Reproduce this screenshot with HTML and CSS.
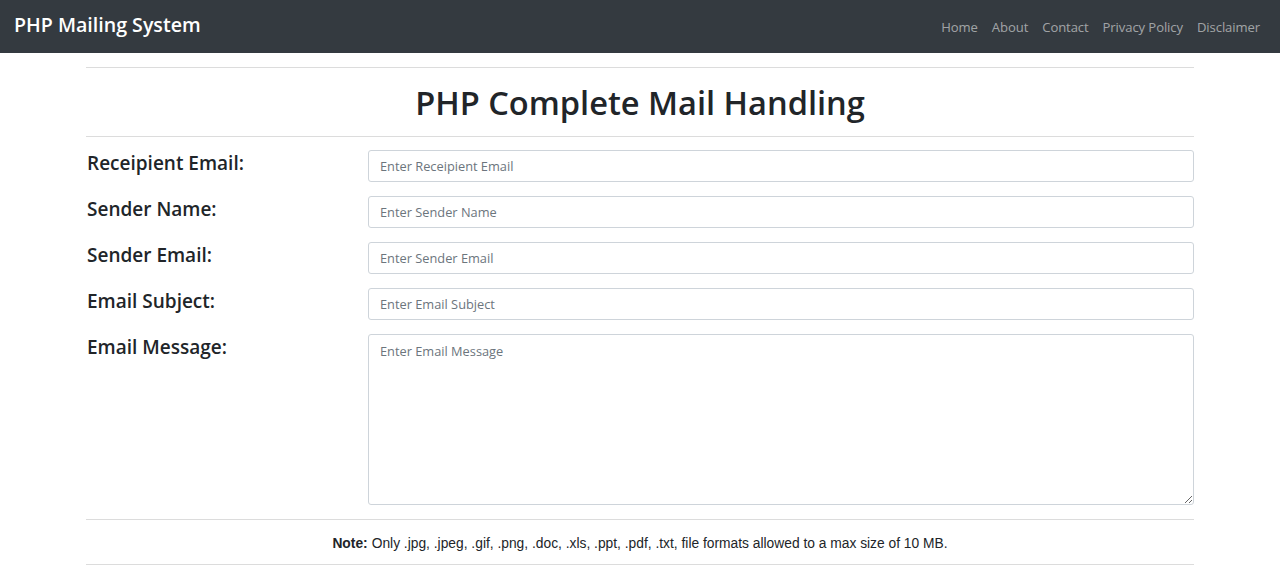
FILE: index.html
```html
<!DOCTYPE html>
<html lang="en">
<head>
<meta charset="utf-8">
<title>PHP Mailing System</title>
<link rel="stylesheet" href="styles.css">
</head>
<body>
<nav class="navbar">
  <a class="brand" href="#">PHP Mailing System</a>
  <ul class="nav">
    <li><a href="#">Home</a></li>
    <li><a href="#">About</a></li>
    <li><a href="#">Contact</a></li>
    <li><a href="#">Privacy Policy</a></li>
    <li><a href="#">Disclaimer</a></li>
  </ul>
</nav>
<main class="container">
  <hr class="rule rule-top">
  <h2 class="title">PHP Complete Mail Handling</h2>
  <hr class="rule">
  <form class="mail-form">
    <label class="label" for="to">Receipient Email:</label>
    <input class="field" id="to" type="email" placeholder="Enter Receipient Email">
    <label class="label" for="name">Sender Name:</label>
    <input class="field" id="name" type="text" placeholder="Enter Sender Name">
    <label class="label" for="from">Sender Email:</label>
    <input class="field" id="from" type="email" placeholder="Enter Sender Email">
    <label class="label" for="subj">Email Subject:</label>
    <input class="field" id="subj" type="text" placeholder="Enter Email Subject">
    <label class="label" for="msg">Email Message:</label>
    <textarea class="field area" id="msg" placeholder="Enter Email Message"></textarea>
  </form>
  <hr class="rule rule-note">
  <p class="note"><b>Note:</b> Only .jpg, .jpeg, .gif, .png, .doc, .xls, .ppt, .pdf, .txt, file formats allowed to a max size of 10 MB.</p>
  <hr class="rule">
</main>
</body>
</html>
```
FILE: styles.css
```css
* { box-sizing: border-box; }
body {
  margin: 0;
  font-family: "Open Sans", "Noto Sans", sans-serif;
  color: #212529;
  background: #fff;
}
.navbar {
  height: 53px;
  background: #343a40;
  display: flex;
  align-items: center;
  justify-content: space-between;
  padding: 0 14px 0 14px;
}
.brand {
  color: #fff;
  font-size: 19.6px;
  font-weight: 600;
  text-decoration: none;
  margin-top: -5px;
  letter-spacing: 0;
}
.nav {
  list-style: none;
  margin: 0;
  padding: 0;
  display: flex;
  gap: 0;
}
.nav a {
  display: block;
  padding: 0 7px;
  color: rgba(255,255,255,.55);
  text-decoration: none;
  font-size: 13.1px;
  letter-spacing: -0.1px;
}
.nav li:last-child a { padding-right: 6px; }
.container {
  width: 1108px;
  margin: 0 auto;
}
.rule {
  border: 0;
  border-top: 1px solid #dcdcdc;
  margin: 0;
}
.rule-top { margin-top: 14px; }
.title {
  margin: 0;
  height: 68px;
  display: flex;
  align-items: center;
  justify-content: center;
  font-size: 32.6px;
  font-weight: 600;
  letter-spacing: 0;
}
.mail-form {
  display: grid;
  grid-template-columns: 282px 1fr;
  row-gap: 14px;
  padding-top: 13px;
}
.label {
  font-size: 19px;
  font-weight: 600;
  letter-spacing: 0;
  line-height: 24px;
  padding-left: 1px;
  margin-top: 1px;
}
.field {
  height: 32px;
  border: 1px solid #ced4da;
  border-radius: 3px;
  padding: 0 11px;
  font-family: "Open Sans", sans-serif;
  font-size: 12.8px;
  color: #495057;
}
.field::placeholder { color: #6c757d; }
.area {
  height: 171px;
  padding-top: 7px;
  resize: vertical;
}
.rule-note { margin-top: 14px; }
.note {
  margin: 0;
  height: 44px;
  display: flex;
  align-items: center;
  justify-content: center;
  font-family: "Liberation Sans", Arial, sans-serif;
  font-size: 13.8px;
  color: #212529;
  padding-top: 3px;
}
.note b { font-weight: 700; margin-right: 4px; }
```
